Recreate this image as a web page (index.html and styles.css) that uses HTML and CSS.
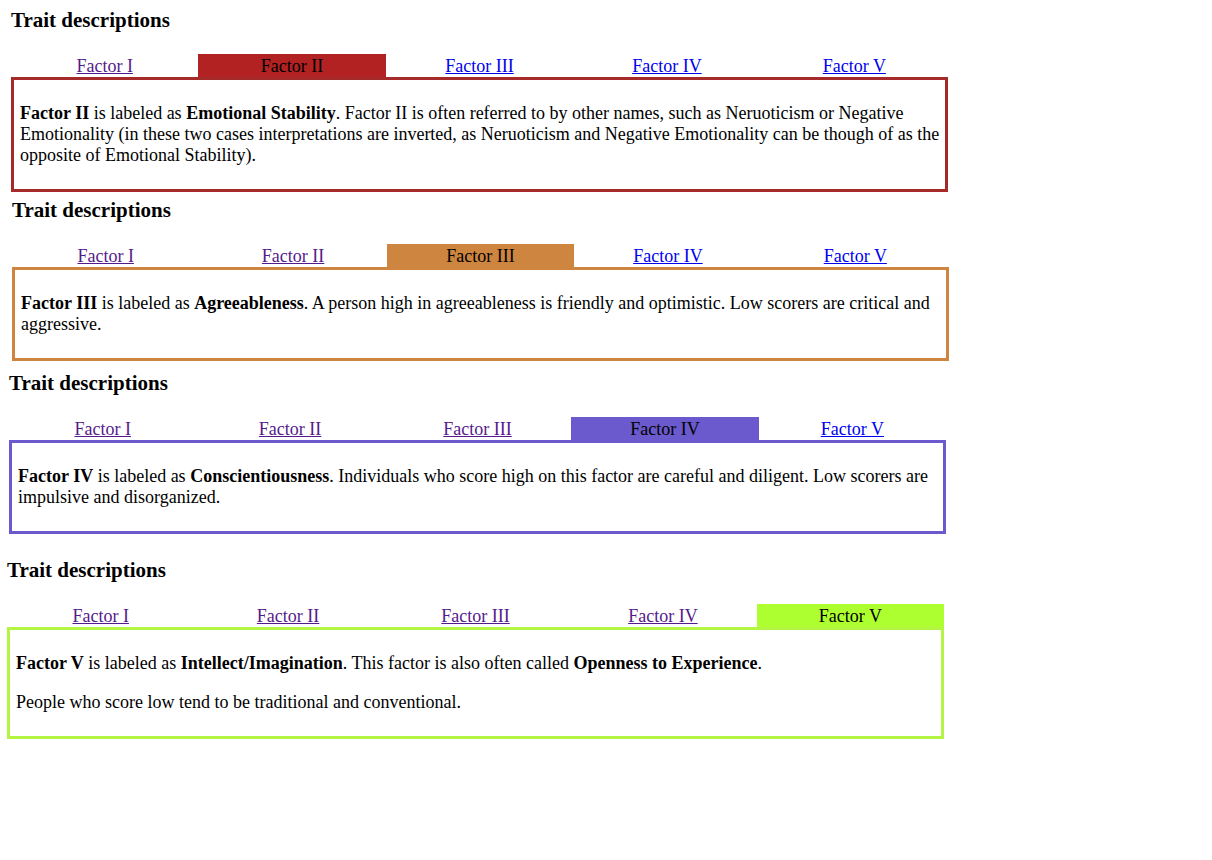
FILE: index.html
```html
<!DOCTYPE html>
<html lang="en">
<head>
<meta charset="utf-8">
<title>Trait descriptions</title>
<link rel="stylesheet" href="styles.css">
</head>
<body>
<section class="trait trait-2">
  <h3 class="trait-title">Trait descriptions</h3>
  <nav class="tabs">
    <a class="tab visited" href="#f1">Factor I</a>
    <span class="tab active">Factor II</span>
    <a class="tab" href="#f3">Factor III</a>
    <a class="tab" href="#f4">Factor IV</a>
    <a class="tab" href="#f5">Factor V</a>
  </nav>
  <div class="panel">
    <p><b>Factor II</b> is labeled as <b>Emotional Stability</b>. Factor II is often referred to by other names, such as Neruoticism or Negative Emotionality (in these two cases interpretations are inverted, as Neruoticism and Negative Emotionality can be though of as the opposite of Emotional Stability).</p>
  </div>
</section>

<section class="trait trait-3">
  <h3 class="trait-title">Trait descriptions</h3>
  <nav class="tabs">
    <a class="tab visited" href="#f1">Factor I</a>
    <a class="tab visited" href="#f2">Factor II</a>
    <span class="tab active">Factor III</span>
    <a class="tab" href="#f4">Factor IV</a>
    <a class="tab" href="#f5">Factor V</a>
  </nav>
  <div class="panel">
    <p><b>Factor III</b> is labeled as <b>Agreeableness</b>. A person high in agreeableness is friendly and optimistic. Low scorers are critical and aggressive.</p>
  </div>
</section>

<section class="trait trait-4">
  <h3 class="trait-title">Trait descriptions</h3>
  <nav class="tabs">
    <a class="tab visited" href="#f1">Factor I</a>
    <a class="tab visited" href="#f2">Factor II</a>
    <a class="tab visited" href="#f3">Factor III</a>
    <span class="tab active">Factor IV</span>
    <a class="tab" href="#f5">Factor V</a>
  </nav>
  <div class="panel">
    <p><b>Factor IV</b> is labeled as <b>Conscientiousness</b>. Individuals who score high on this factor are careful and diligent. Low scorers are impulsive and disorganized.</p>
  </div>
</section>

<section class="trait trait-5">
  <h3 class="trait-title">Trait descriptions</h3>
  <nav class="tabs">
    <a class="tab visited" href="#f1">Factor I</a>
    <a class="tab visited" href="#f2">Factor II</a>
    <a class="tab visited" href="#f3">Factor III</a>
    <a class="tab visited" href="#f4">Factor IV</a>
    <span class="tab active">Factor V</span>
  </nav>
  <div class="panel">
    <p><b>Factor V</b> is labeled as <b>Intellect/Imagination</b>. This factor is also often called <b>Openness to Experience</b>.</p>
    <p>People who score low tend to be traditional and conventional.</p>
  </div>
</section>
</body>
</html>
```

FILE: styles.css
```css
html, body {
  margin: 0;
  padding: 0;
  background: #ffffff;
}

body {
  font-family: "Liberation Serif", "Times New Roman", serif;
  font-size: 18px;
  line-height: 21px;
  color: #000000;
}

.trait {
  width: 937px;
}

.trait-2 { margin: 8px 0 0 11px; }
.trait-3 { margin: 6px 0 0 12px; }
.trait-4 { margin: 10px 0 0 9px; }
.trait-5 { margin: 24px 0 0 7px; }

.trait-title {
  margin: 0 0 22px 0;
  font-size: 21px;
  line-height: 24px;
  font-weight: bold;
}

.tabs {
  display: flex;
}

.tab {
  flex: 1 1 0;
  text-align: center;
  padding: 2px 0 0 0;
  color: #0000ee;
  text-decoration: underline;
}

.tab.visited {
  color: #551a8b;
}

.tab.active {
  color: #000000;
  text-decoration: none;
}

.panel {
  border: 3px solid;
  padding: 5px 2px 5px 6px;
}

.panel p {
  margin: 18px 0;
}

.trait-2 .tab.active { background: #b22222; }
.trait-2 .panel { border-color: #a52a2a; }

.trait-3 .tab.active { background: #cd853f; }
.trait-3 .panel { border-color: #cd853f; }

.trait-4 .tab.active { background: #6a5acd; }
.trait-4 .panel { border-color: #6a5acd; }

.trait-5 .tab.active { background: #adff2f; }
.trait-5 .panel { border-color: #b3f542; }
```
